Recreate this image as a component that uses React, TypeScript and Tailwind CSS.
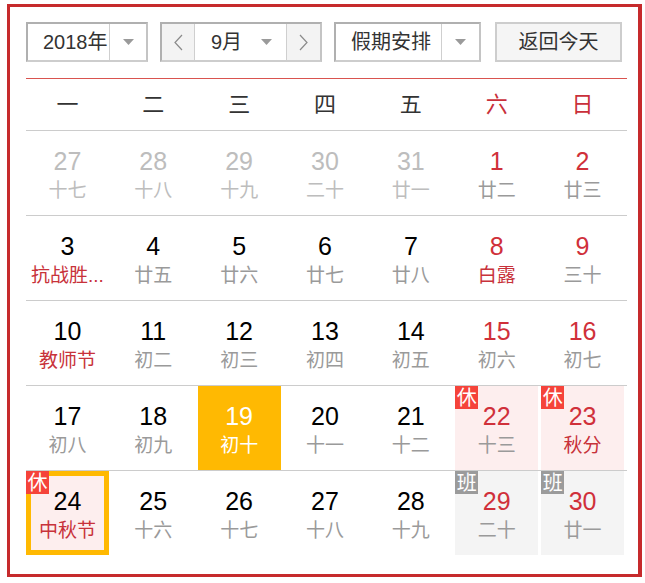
import React from 'react';

type Day = {
  n: number;
  sub: string;
  prev?: boolean;
  redNum?: boolean;
  redSub?: boolean;
  today?: boolean;
  rest?: boolean;
  work?: boolean;
  selected?: boolean;
};

const weeks: Day[][] = [
  [
    { n: 27, sub: '十七', prev: true },
    { n: 28, sub: '十八', prev: true },
    { n: 29, sub: '十九', prev: true },
    { n: 30, sub: '二十', prev: true },
    { n: 31, sub: '廿一', prev: true },
    { n: 1, sub: '廿二', redNum: true },
    { n: 2, sub: '廿三', redNum: true },
  ],
  [
    { n: 3, sub: '抗战胜...', redSub: true },
    { n: 4, sub: '廿五' },
    { n: 5, sub: '廿六' },
    { n: 6, sub: '廿七' },
    { n: 7, sub: '廿八' },
    { n: 8, sub: '白露', redNum: true, redSub: true },
    { n: 9, sub: '三十', redNum: true },
  ],
  [
    { n: 10, sub: '教师节', redSub: true },
    { n: 11, sub: '初二' },
    { n: 12, sub: '初三' },
    { n: 13, sub: '初四' },
    { n: 14, sub: '初五' },
    { n: 15, sub: '初六', redNum: true },
    { n: 16, sub: '初七', redNum: true },
  ],
  [
    { n: 17, sub: '初八' },
    { n: 18, sub: '初九' },
    { n: 19, sub: '初十', today: true },
    { n: 20, sub: '十一' },
    { n: 21, sub: '十二' },
    { n: 22, sub: '十三', redNum: true, rest: true },
    { n: 23, sub: '秋分', redNum: true, redSub: true, rest: true },
  ],
  [
    { n: 24, sub: '中秋节', redSub: true, rest: true, selected: true },
    { n: 25, sub: '十六' },
    { n: 26, sub: '十七' },
    { n: 27, sub: '十八' },
    { n: 28, sub: '十九' },
    { n: 29, sub: '二十', redNum: true, work: true },
    { n: 30, sub: '廿一', redNum: true, work: true },
  ],
];

const weekdays = ['一', '二', '三', '四', '五', '六', '日'];

const font = { fontFamily: '"Liberation Sans", "Noto Sans CJK SC", sans-serif' };

function Caret() {
  return (
    <svg width="11" height="6" viewBox="0 0 11 6" className="block">
      <path d="M0 0H11L5.5 6Z" fill="#9a9a9a" />
    </svg>
  );
}

function Chevron({ dir }: { dir: 'left' | 'right' }) {
  return (
    <svg width="9" height="17" viewBox="0 0 9 17" className="block">
      <polyline
        points={dir === 'left' ? '8,1 1,8.5 8,16' : '1,1 8,8.5 1,16'}
        fill="none"
        stroke="#8a8a8a"
        strokeWidth="1.2"
      />
    </svg>
  );
}

function DayCell({ d }: { d: Day }) {
  let bg = '';
  if (d.today) bg = 'bg-[#ffb902]';
  else if (d.rest) bg = 'bg-[#fdeeee]';
  else if (d.work) bg = 'bg-[#f4f4f4]';

  let numColor = 'text-black';
  if (d.prev) numColor = 'text-[#bdbdbd]';
  else if (d.today) numColor = 'text-white';
  else if (d.redNum) numColor = 'text-[#d0303a]';

  let subColor = 'text-[#9a9a9a]';
  if (d.prev) subColor = 'text-[#bdbdbd]';
  else if (d.today) subColor = 'text-white';
  else if (d.redSub) subColor = 'text-[#c8323a]';

  return (
    <div className="h-[84px] pr-[3px]">
      <div
        className={`relative flex h-full flex-col items-center pt-[16px] ${bg} ${
          d.selected ? 'shadow-[inset_0_0_0_5px_#ffb902]' : ''
        }`}
      >
        {(d.rest || d.work) && (
          <span
            className={`absolute left-0 top-0 flex h-[23px] w-[23px] items-center justify-center text-[20px] leading-none text-white ${
              d.rest ? 'bg-[#f5433a]' : 'bg-[#9b9b9b]'
            }`}
          >
            {d.rest ? '休' : '班'}
          </span>
        )}
        <span className={`text-[25px] leading-[28px] ${numColor}`}>{d.n}</span>
        <span className={`mt-[4px] whitespace-nowrap text-[19px] leading-[23px] ${subColor}`}>{d.sub}</span>
      </div>
    </div>
  );
}

export default function App() {
  return (
    <div className="min-h-[583px] bg-white pl-[7px] pt-[4px]" style={font}>
      <div className="box-border h-[573px] w-[635px] border-[3px] border-r-[4px] border-[#c62a2c] pb-[19px] pl-[16px] pr-[11px] pt-[15px]">
        {/* toolbar */}
        <div className="flex h-[40px] items-stretch text-[20px] text-[#333]">
          <div className="flex w-[122px] border-2 border-[#b0b0b0] border-b-[#cdcdcd] border-r-[#c4c4c4]">
            <div className="flex flex-1 items-center border-r border-[#cfcfcf] pl-[15px]">2018年</div>
            <div className="flex w-[36px] items-center justify-center">
              <Caret />
            </div>
          </div>

          <div className="ml-[12px] flex w-[162px] border-2 border-[#b0b0b0] border-b-[#cdcdcd] border-r-[#c4c4c4]">
            <div className="flex w-[33px] items-center justify-center border-r border-[#cfcfcf] bg-[#f3f3f3]">
              <Chevron dir="left" />
            </div>
            <div className="flex flex-1 items-center pl-[16px]">
              <span>9月</span>
              <span className="ml-auto mr-[14px]">
                <Caret />
              </span>
            </div>
            <div className="flex w-[34px] items-center justify-center border-l border-[#cfcfcf] bg-[#f3f3f3]">
              <Chevron dir="right" />
            </div>
          </div>

          <div className="ml-[12px] flex w-[147px] border-2 border-[#b0b0b0] border-b-[#cdcdcd] border-r-[#c4c4c4]">
            <div className="flex flex-1 items-center border-r border-[#cfcfcf] pl-[15px]">假期安排</div>
            <div className="flex w-[37px] items-center justify-center">
              <Caret />
            </div>
          </div>

          <button className="ml-[14px] w-[127px] border-2 border-[#cdcdcd] bg-[#f5f5f5] text-[20px] text-[#333]">
            返回今天
          </button>
        </div>

        {/* weekday header */}
        <div className="mt-[16px] grid h-[52px] grid-cols-7 border-t border-[#d9534f] text-[22px]">
          {weekdays.map((w, i) => (
            <div
              key={w}
              className={`flex items-center justify-center pr-[3px] ${i >= 5 ? 'text-[#c9303a]' : 'text-[#333]'}`}
            >
              {w}
            </div>
          ))}
        </div>

        {/* weeks */}
        {weeks.map((row, ri) => (
          <div key={ri} className="grid grid-cols-7 border-t border-[#cccccc]">
            {row.map((d, ci) => (
              <DayCell key={ci} d={d} />
            ))}
          </div>
        ))}
      </div>
    </div>
  );
}
